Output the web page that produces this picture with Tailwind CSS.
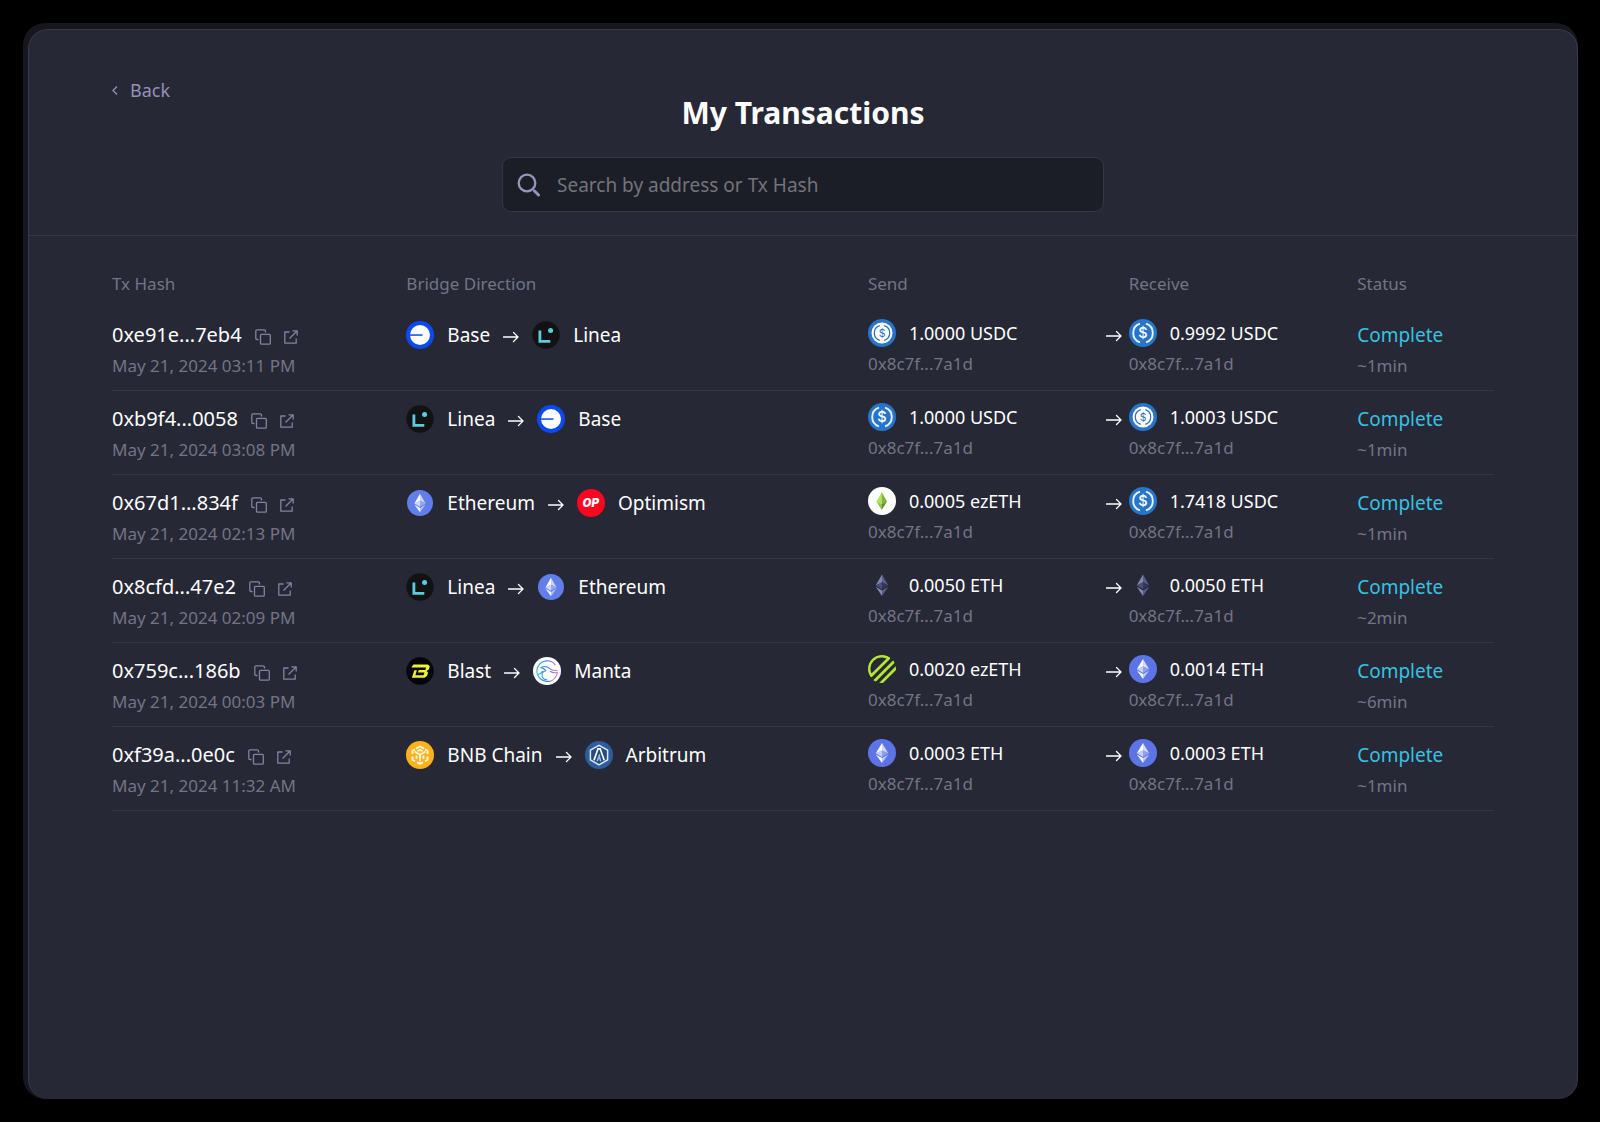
<!DOCTYPE html>
<html lang="en">
<head>
  <meta charset="UTF-8" />
  <meta name="viewport" content="width=device-width, initial-scale=1.0" />
  <title>My Transactions</title>
  <script src="https://cdn.jsdelivr.net/npm/@tailwindcss/browser@4"></script>
</head>
<body class="bg-black text-white min-h-screen flex py-[23px] pr-[22px] pl-[23px] font-['Noto_Sans',sans-serif]">

  <!-- Shared gradient and clip -->
  <svg class="absolute h-0 w-0" aria-hidden="true">
    <defs>
      <linearGradient id="mantaGrad" gradientUnits="userSpaceOnUse" x1="4" y1="0" x2="25" y2="0">
        <stop offset="0" stop-color="#2fb4e0"/>
        <stop offset="0.5" stop-color="#3f7de8"/>
        <stop offset="1" stop-color="#e27ac8"/>
      </linearGradient>
      <clipPath id="disc"><circle cx="14" cy="14" r="14"/></clipPath>
    </defs>
  </svg>

  <!-- Icon sprites -->
  <svg class="hidden" aria-hidden="true">
    <symbol id="arrow" viewBox="0 0 16 12">
      <path d="M.5 6h14.5M10.500 1.500L15 6l-4.500 4.500" fill="none" stroke="currentColor" stroke-width="1.300" stroke-linecap="round" stroke-linejoin="round"/>
    </symbol>
    <symbol id="copy" viewBox="0 0 16 16">
      <path d="M3.500 10.500H2A1.200 1.200 0 01.8 9.300V2A1.200 1.200 0 012 .8h7.300A1.200 1.200 0 0110.500 2v1.500" fill="none" stroke="currentColor" stroke-width="1.300"/>
      <rect x="5.500" y="5.300" width="9.800" height="9.900" rx="1" fill="none" stroke="currentColor" stroke-width="1.300"/>
    </symbol>
    <symbol id="external" viewBox="0 0 14 14">
      <path d="M5.500 2H.8v11.200h11.400V8.500M8.500.8h4.700v4.700M13 1L5.500 8.500" fill="none" stroke="currentColor" stroke-width="1.300" stroke-linejoin="round"/>
    </symbol>
    <symbol id="base" viewBox="0 0 28 28">
      <circle cx="14" cy="14" r="14" fill="#0b49f2"/>
      <circle cx="14" cy="14" r="10" fill="#fff"/>
      <path d="M4 13.300h12.500v1.500H4z" fill="#0b49f2"/>
    </symbol>
    <symbol id="linea" viewBox="0 0 28 28">
      <circle cx="14" cy="14" r="13.700" fill="#121212"/>
      <path d="M6.500 9.500h2.800v9.500h9v2.700H6.500z" fill="#5ccbe2"/>
      <circle cx="18.600" cy="9.400" r="2.500" fill="#5ccbe2"/>
    </symbol>
    <symbol id="ethereum" viewBox="0 0 28 28">
      <circle cx="14" cy="14" r="13" fill="#627eea"/>
      <path d="M14 4.800v6.900l5.600 2.700z" fill="#c9d3fa"/>
      <path d="M14 4.800L8.400 14.400l5.600-2.700z" fill="#fff"/>
      <path d="M14 11.700v6l5.600-3.300z" fill="#93a6f0"/>
      <path d="M14 11.700l-5.600 2.700 5.600 3.300z" fill="#cfd8fb"/>
      <path d="M14 18.900v4.400l5.600-7.700z" fill="#b5c2f6"/>
      <path d="M14 18.900l-5.600-3.300 5.600 7.700z" fill="#f4f6ff"/>
    </symbol>
    <symbol id="eth" viewBox="0 0 28 28">
      <circle cx="14" cy="14" r="14" fill="#5d74e6"/>
      <path d="M14 4v7.500l6.200 2.800z" fill="#d2d9fb"/>
      <path d="M14 4L7.800 14.300l6.200-2.800z" fill="#fff"/>
      <path d="M14 11.500v6.400l6.200-3.600z" fill="#8f9ff0"/>
      <path d="M14 11.500l-6.200 2.800 6.200 3.600z" fill="#c7d0fa"/>
      <path d="M14 19.100v5l6.200-8.500z" fill="#bcc7f8"/>
      <path d="M14 19.100l-6.200-3.500 6.200 8.500z" fill="#f4f6ff"/>
    </symbol>
    <symbol id="ethDark" viewBox="0 0 28 28">
      <path d="M14 3.500v7.800l6.300 3.200z" fill="#5a5d83"/>
      <path d="M14 3.500L7.700 14.500l6.300-3.200z" fill="#8286ad"/>
      <path d="M14 11.300v7l6.300-3.800z" fill="#33355a"/>
      <path d="M14 11.300l-6.300 3.200 6.300 3.800z" fill="#4b4e76"/>
      <path d="M14 19.500v5.500l6.300-9.200z" fill="#5a5d83"/>
      <path d="M14 19.500l-6.300-3.700L14 25z" fill="#8286ad"/>
    </symbol>
    <symbol id="optimism" viewBox="0 0 28 28">
      <circle cx="14" cy="14" r="14" fill="#ff0420"/>
      <text x="13.700" y="18.200" text-anchor="middle" font-family="Inter, sans-serif" font-size="11.500" font-weight="900" font-style="italic" fill="#fff">OP</text>
    </symbol>
    <symbol id="blast" viewBox="0 0 28 28">
      <circle cx="14" cy="14" r="13.700" fill="#050505"/>
      <path d="M7.500 7.500h14.300l2 1.800-1 3.300-2.300 1.300 1.600 1.700-1.100 3.500-2.600 1.600H5.900l2.400-7.500h2.600l-1.500 5h8.200l.8-2.600h-6.500l.8-2.600h6.600l.8-2.500H5.300z" fill="#eef52a"/>
    </symbol>
    <symbol id="manta" viewBox="0 0 28 28">
      <circle cx="14" cy="14" r="14" fill="#fff"/>
      <g fill="none" stroke="url(#mantaGrad)" stroke-width="1.100" stroke-linecap="round" stroke-linejoin="round">
        <path d="M22.300 8A10.200 10.200 0 1012.500 24.100c3 .7 7 0 9.500-3.100 1.500-1.700 2.300-3.800 2.300-5.800-2.500 1-4.500.7-6.800-.7"/>
        <path d="M8 10.500c3-1.700 6.200-1 8.700 1.200 2.200 1.900 4.500 2 7.400 1.700"/>
        <path d="M8 10.600c2 .5 4 1.600 5 3.100-2.400.4-4 1.900-4 4.300 0 2.500 2 4.500 4.600 4.700"/>
        <path d="M5 17.500c1.800-.6 3.300-1.800 4.500-3.200"/>
      </g>
    </symbol>
    <symbol id="bnb" viewBox="0 0 28 28">
      <circle cx="14" cy="14" r="14" fill="#fbb21c"/>
      <g fill="none" stroke="#fff7e0" stroke-width="1.800" stroke-linejoin="round">
        <path d="M10 7.600L14 5.500l4 2.100M6.500 13V9.700L9 8.300M21.500 13V9.700L19 8.300M6.500 15.500v3.200L9 20.200M21.500 15.500v3.200L19 20.200M11 21.300l3 1.600 3-1.600"/>
        <path d="M8.500 10.500l5.500 3.200 5.500-3.200M14 13.700v6.800M10.500 14.500v3.300M17.500 14.500v3.300M11.500 10.200L14 8.800l2.500 1.400"/>
      </g>
    </symbol>
    <symbol id="arbitrum" viewBox="0 0 28 28">
      <circle cx="14" cy="14" r="14" fill="#2e5c9f"/>
      <path d="M14 4.300l8.600 4.900v9.700L14 23.800l-8.600-4.900V9.200z" fill="#2a4a7c" stroke="#d9ecfb" stroke-width="1.500" stroke-linejoin="round"/>
      <path d="M9 19.300l4-11.500h2.200l4 11.500" fill="none" stroke="#fff" stroke-width="1.700"/>
      <path d="M12.200 20.300l2.500-7M15.800 20.300l-1.500-4.500" fill="none" stroke="#8fc4f2" stroke-width="1.500"/>
    </symbol>
    <symbol id="usdc" viewBox="0 0 28 28">
      <circle cx="14" cy="14" r="14" fill="#2775ca"/>
      <path d="M11 4.600a9.900 9.900 0 000 18.800M17 4.600a9.900 9.900 0 010 18.800" fill="none" stroke="#e6f2ff" stroke-width="1.900"/>
      <text x="14" y="19.200" text-anchor="middle" font-family="Inter, sans-serif" font-size="14.500" font-weight="500" fill="#fff">$</text>
    </symbol>
    <symbol id="usdcBridged" viewBox="0 0 28 28">
      <circle cx="14" cy="14" r="14" fill="#2775ca"/>
      <circle cx="14" cy="14" r="10.500" fill="#fff"/>
      <path d="M11.800 6.700a7.600 7.600 0 000 14.600M16.200 6.700a7.600 7.600 0 010 14.600" fill="none" stroke="#2f6fb8" stroke-width="1.200"/>
      <text x="14" y="17.700" text-anchor="middle" font-family="Inter, sans-serif" font-size="10.500" font-weight="400" fill="#2f6fb8">$</text>
    </symbol>
    <symbol id="ezethLight" viewBox="0 0 28 28">
      <circle cx="14" cy="14" r="14" fill="#fff"/>
      <path d="M13.700 5.300L8.400 14.500l5.300 2.500z" fill="#b5e061"/>
      <path d="M13.700 5.300l5.300 9.200-5.300 2.500z" fill="#7cb82f"/>
      <path d="M8.400 14.500l5.300 8.500v-6z" fill="#8cc63f"/>
      <path d="M19 14.500L13.700 23v-6z" fill="#5a9421"/>
    </symbol>
    <symbol id="ezeth" viewBox="0 0 28 28">
      <g clip-path="url(#disc)" fill="none" stroke="#b4e632" stroke-width="2.700" stroke-linejoin="round">
        <path d="M3.200 20.800A12.700 12.700 0 0120.800 3.200z"/>
        <path d="M5 27.500L29 3.500"/>
        <path d="M12 29L30 11"/>
      </g>
    </symbol>
  </svg>

  <div class="flex flex-1 rounded-[22px] bg-[#15161e] pt-[6px] pl-[5px]">
    <main class="flex-1 rounded-[20px] border border-b-0 border-[#383a49] bg-[#262835]">

      <header class="grid grid-cols-[1fr_auto_1fr] items-start border-b border-[#343645] px-[83px] pt-12 pb-[23px]">
        <a href="#" class="flex items-center gap-3 justify-self-start text-[18px] leading-6 text-[#9491b5]">
          <svg class="h-[9px] w-[6px]" viewBox="0 0 6 9" fill="none" stroke="currentColor" stroke-width="1.300"><path d="M5 .5L1 4.500l4 4"/></svg>
          Back
        </a>
        <h1 class="mt-[15px] text-center text-[30px] leading-10 font-bold">My Transactions</h1>
        <form class="col-span-3 mt-6 flex h-[55px] w-full max-w-[602px] items-center gap-4 justify-self-center rounded-[9px] border border-[#343645] bg-[#1c1e27] px-[14px]">
          <svg class="h-6 w-6 shrink-0 text-[#9896b8]" viewBox="0 0 24 24" fill="none" stroke="currentColor">
            <circle cx="10" cy="10" r="8.300" stroke-width="2.300"/>
            <path d="M17.500 18l4 4" stroke-width="3" stroke-linecap="round"/>
          </svg>
          <input type="text" aria-label="Search by address or Tx Hash" placeholder="Search by address or Tx Hash" class="flex-1 bg-transparent text-[19px] leading-7 outline-none placeholder:text-[#73747a]" />
        </form>
      </header>

      <section class="px-[83px] pt-9">
        <table class="w-full table-fixed border-separate border-spacing-0 text-left">
          <colgroup>
            <col class="w-[21.3%]" />
            <col class="w-[33.4%]" />
            <col class="w-[17.2%]" />
            <col class="w-[18.2%]" />
            <col class="w-[9.9%]" />
          </colgroup>
          <thead class="text-[17px] leading-6 text-[#737487]">
            <tr>
              <th class="pb-[11px] font-normal">Tx Hash</th>
              <th class="pb-[11px] font-normal">Bridge Direction</th>
              <th class="pb-[11px] font-normal">Send</th>
              <th class="pb-[11px] pl-[23px] font-normal">Receive</th>
              <th class="pb-[11px] font-normal">Status</th>
            </tr>
          </thead>
          <tbody id="txRows"></tbody>
        </table>
      </section>
    </main>
  </div>

  <script>
    const transactions = [
      { hash: "0xe91e...7eb4", date: "May 21, 2024 03:11 PM", from: ["base", "Base"], to: ["linea", "Linea"], send: ["usdcBridged", "1.0000 USDC"], receive: ["usdc", "0.9992 USDC"], time: "~1min" },
      { hash: "0xb9f4...0058", date: "May 21, 2024 03:08 PM", from: ["linea", "Linea"], to: ["base", "Base"], send: ["usdc", "1.0000 USDC"], receive: ["usdcBridged", "1.0003 USDC"], time: "~1min" },
      { hash: "0x67d1...834f", date: "May 21, 2024 02:13 PM", from: ["ethereum", "Ethereum"], to: ["optimism", "Optimism"], send: ["ezethLight", "0.0005 ezETH"], receive: ["usdc", "1.7418 USDC"], time: "~1min" },
      { hash: "0x8cfd...47e2", date: "May 21, 2024 02:09 PM", from: ["linea", "Linea"], to: ["ethereum", "Ethereum"], send: ["ethDark", "0.0050 ETH"], receive: ["ethDark", "0.0050 ETH"], time: "~2min" },
      { hash: "0x759c...186b", date: "May 21, 2024 00:03 PM", from: ["blast", "Blast"], to: ["manta", "Manta"], send: ["ezeth", "0.0020 ezETH"], receive: ["eth", "0.0014 ETH"], time: "~6min" },
      { hash: "0xf39a...0e0c", date: "May 21, 2024 11:32 AM", from: ["bnb", "BNB Chain"], to: ["arbitrum", "Arbitrum"], send: ["eth", "0.0003 ETH"], receive: ["eth", "0.0003 ETH"], time: "~1min" }
    ];
    const address = "0x8c7f...7a1d";

    function icon(name, size) {
      return `<svg class="${size} shrink-0" aria-hidden="true"><use href="#${name}"/></svg>`;
    }

    document.getElementById("txRows").innerHTML = transactions.map(tx => `
      <tr class="h-[84px] align-top">
        <td class="border-b border-[#33353f] pt-[14px]">
          <div class="flex items-center gap-[13px] text-[20px] leading-7">
            ${tx.hash}
            <button type="button" aria-label="Copy hash" class="mt-1 text-[#8481a4]">${icon("copy", "h-4 w-4")}</button>
            <a href="#" aria-label="Open in explorer" class="mt-1 text-[#8481a4]">${icon("external", "h-[14px] w-[14px]")}</a>
          </div>
          <p class="mt-[5px] text-[17px] leading-6 text-[#737487]">${tx.date}</p>
        </td>
        <td class="border-b border-[#33353f] pt-[14px]">
          <div class="flex items-center gap-[13px] text-[19px] leading-7">
            ${icon(tx.from[0], "h-7 w-7")} ${tx.from[1]}
            ${icon("arrow", "mt-1 h-3 w-4")}
            ${icon(tx.to[0], "h-7 w-7")} ${tx.to[1]}
          </div>
        </td>
        <td class="border-b border-[#33353f] pt-3">
          <div class="flex items-center gap-[13px] text-[18px] leading-7">${icon(tx.send[0], "h-7 w-7")} ${tx.send[1]}</div>
          <p class="mt-[5px] text-[17px] leading-6 text-[#737487]">${address}</p>
        </td>
        <td class="border-b border-[#33353f] pt-3">
          <div class="flex items-center text-[18px] leading-7">
            ${icon("arrow", "mt-1.5 mr-[7px] h-3 w-4")}
            ${icon(tx.receive[0], "mr-[13px] h-7 w-7")} ${tx.receive[1]}
          </div>
          <p class="mt-[5px] pl-[23px] text-[17px] leading-6 text-[#737487]">${address}</p>
        </td>
        <td class="border-b border-[#33353f] pt-[14px]">
          <p class="text-[19px] leading-7 text-[#38c0e2]">Complete</p>
          <p class="mt-[5px] text-[17px] leading-6 text-[#737487]">${tx.time}</p>
        </td>
      </tr>`).join("");
  </script>

</body>
</html>
